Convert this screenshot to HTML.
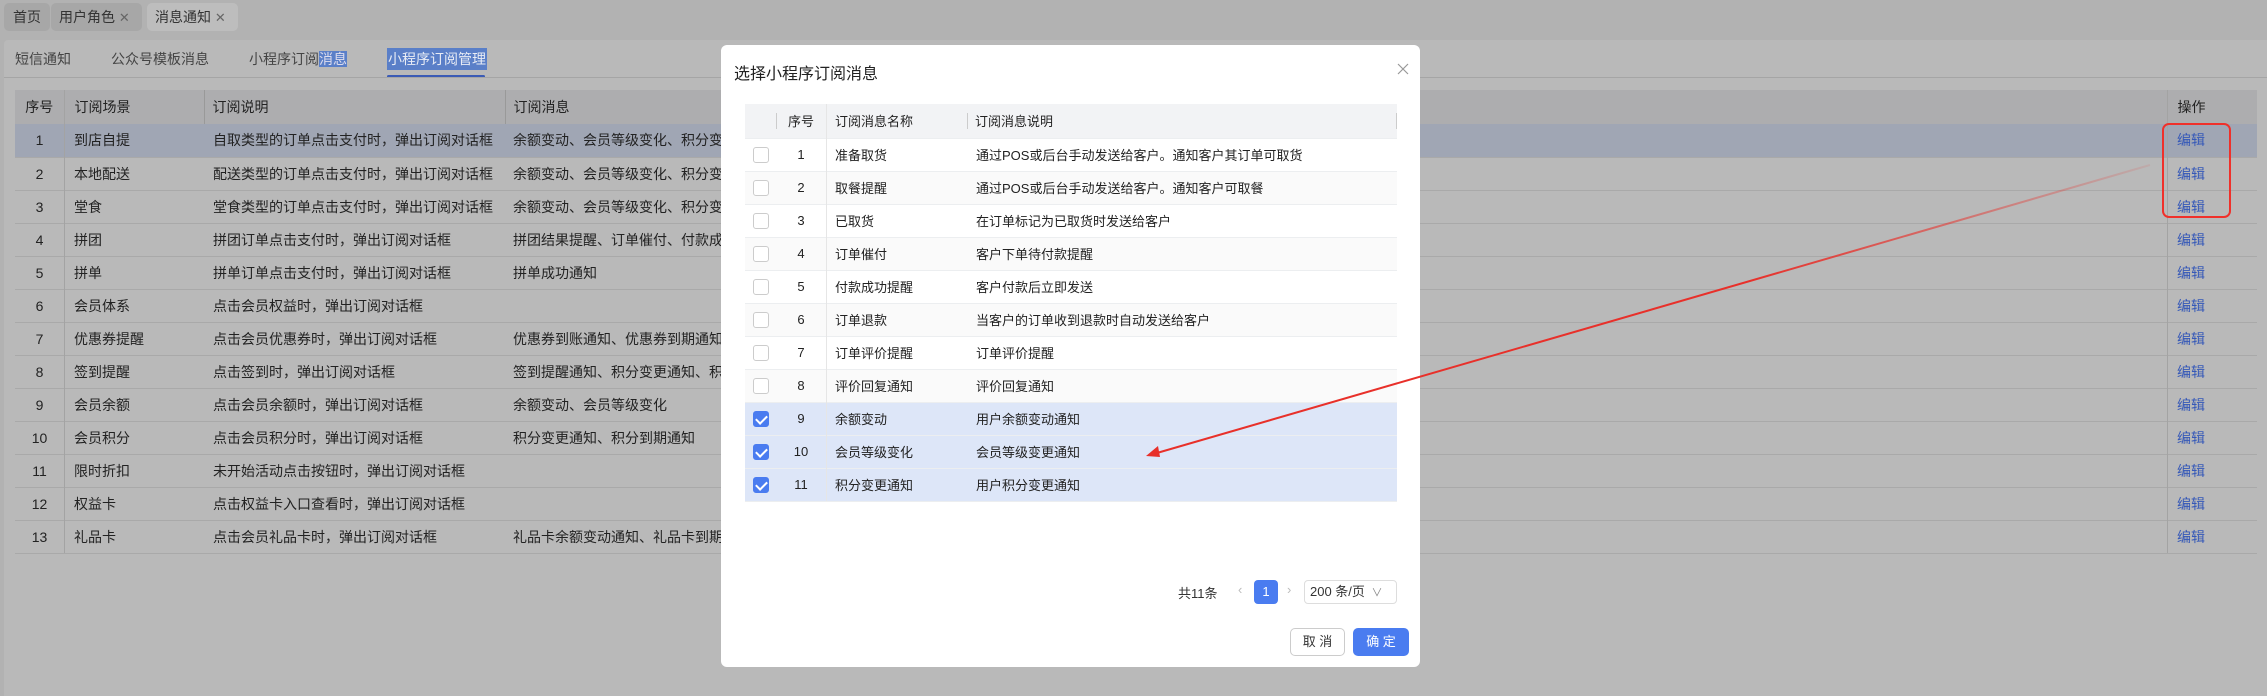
<!DOCTYPE html>
<html><head><meta charset="utf-8"><style>
*{margin:0;padding:0;box-sizing:border-box}
body{width:2267px;height:696px;overflow:hidden;background:#b2b2b2;font-family:"Liberation Sans","Noto Sans CJK SC",sans-serif;font-size:14px;color:#222;position:relative}
.a{position:absolute;white-space:nowrap}
.tab{position:absolute;top:3px;height:28px;background:#a7a7a7;border-radius:5px;line-height:28px;font-size:14px;color:#333;padding:0 8px}
.panel{position:absolute;left:4px;top:40px;width:2263px;height:656px;background:#b9b9b9;border-radius:4px 0 0 0}
table{border-collapse:collapse}
.mt{position:absolute;left:15px;top:90px;width:2242px}
.mt td{height:33px;border-bottom:1px solid #a9a9a9;font-size:14px;color:#222;white-space:nowrap;overflow:hidden}
.mt tr.h td{background:#adadaf;height:34px;border-bottom:none}
.mt tr.sel td{background:#a0a6b4}
.mt td.ed{color:#3558b8}
.modal{position:absolute;left:721px;top:45px;width:699px;height:622px;background:#fff;border-radius:6px}
.st td{height:33px;border-bottom:1px solid #eceef0;font-size:13px;color:#222;white-space:nowrap}
.st tr.h td{background:#f2f3f5;height:34px}
.st tr.alt td{background:#fafafa}
.st tr.ck td{background:#dde6f8}
.cb{display:inline-block;width:16px;height:16px;border:1px solid #ccc;border-radius:3px;background:#fff;vertical-align:middle;position:relative}
.cb.on{background:#4a7cf0;border-color:#4a7cf0}
.cb.on:after{content:"";position:absolute;left:4px;top:1px;width:5px;height:9px;border:solid #fff;border-width:0 2px 2px 0;transform:rotate(45deg)}
.sep{position:absolute;width:1px;height:16px;background:#ccc}
</style></head><body>
<div class="tab" style="left:4px;padding:0 9px">首页</div>
<div class="tab" style="left:51px;width:91px">用户角色 <span style="color:#666;font-size:13px">✕</span></div>
<div class="tab" style="left:147px;width:91px;background:#bdbdbd">消息通知 <span style="color:#666;font-size:13px">✕</span></div>
<div class="panel"></div>
<div class="a" style="left:15px;top:49px;font-size:14px;color:#444">短信通知</div>
<div class="a" style="left:111px;top:49px;font-size:14px;color:#444">公众号模板消息</div>
<div class="a" style="left:249px;top:49px;font-size:14px;color:#444">小程序订阅<span style="background:#5a7fc8;color:#dde">消息</span></div>
<div class="a" style="left:387px;top:48px;font-size:14px;color:#e8ecf5;background:#5a7fc8;padding:1px 1px">小程序订阅管理</div>
<div class="a" style="left:387px;top:75px;width:98px;height:3px;background:#3b5bb5;border-radius:2px"></div>
<div class="a" style="left:4px;top:77px;width:2263px;height:1px;background:#a5a5a5"></div>
<table class="mt">
<tr class="h"><td style="width:49px;text-align:center;border-right:1px solid #9c9c9c">序号</td><td style="width:140px;padding-left:10px">订阅场景</td><td style="width:301px;padding-left:8px;border-left:1px solid #999">订阅说明</td><td style="width:1662px;padding-left:8px;border-left:1px solid #999">订阅消息</td><td style="padding-left:10px;border-left:1px solid #999">操作</td></tr>
<tr class="sel"><td align="center">1</td><td style="padding-left:10px">到店自提</td><td style="padding-left:9px">自取类型的订单点击支付时，弹出订阅对话框</td><td style="padding-left:8px">余额变动、会员等级变化、积分变更通知</td><td style="padding-left:10px" class="ed">编辑</td></tr>
<tr><td align="center">2</td><td style="padding-left:10px">本地配送</td><td style="padding-left:9px">配送类型的订单点击支付时，弹出订阅对话框</td><td style="padding-left:8px">余额变动、会员等级变化、积分变更通知</td><td style="padding-left:10px" class="ed">编辑</td></tr>
<tr><td align="center">3</td><td style="padding-left:10px">堂食</td><td style="padding-left:9px">堂食类型的订单点击支付时，弹出订阅对话框</td><td style="padding-left:8px">余额变动、会员等级变化、积分变更通知</td><td style="padding-left:10px" class="ed">编辑</td></tr>
<tr><td align="center">4</td><td style="padding-left:10px">拼团</td><td style="padding-left:9px">拼团订单点击支付时，弹出订阅对话框</td><td style="padding-left:8px">拼团结果提醒、订单催付、付款成功提醒</td><td style="padding-left:10px" class="ed">编辑</td></tr>
<tr><td align="center">5</td><td style="padding-left:10px">拼单</td><td style="padding-left:9px">拼单订单点击支付时，弹出订阅对话框</td><td style="padding-left:8px">拼单成功通知</td><td style="padding-left:10px" class="ed">编辑</td></tr>
<tr><td align="center">6</td><td style="padding-left:10px">会员体系</td><td style="padding-left:9px">点击会员权益时，弹出订阅对话框</td><td></td><td style="padding-left:10px" class="ed">编辑</td></tr>
<tr><td align="center">7</td><td style="padding-left:10px">优惠券提醒</td><td style="padding-left:9px">点击会员优惠券时，弹出订阅对话框</td><td style="padding-left:8px">优惠券到账通知、优惠券到期通知</td><td style="padding-left:10px" class="ed">编辑</td></tr>
<tr><td align="center">8</td><td style="padding-left:10px">签到提醒</td><td style="padding-left:9px">点击签到时，弹出订阅对话框</td><td style="padding-left:8px">签到提醒通知、积分变更通知、积分到期通知</td><td style="padding-left:10px" class="ed">编辑</td></tr>
<tr><td align="center">9</td><td style="padding-left:10px">会员余额</td><td style="padding-left:9px">点击会员余额时，弹出订阅对话框</td><td style="padding-left:8px">余额变动、会员等级变化</td><td style="padding-left:10px" class="ed">编辑</td></tr>
<tr><td align="center">10</td><td style="padding-left:10px">会员积分</td><td style="padding-left:9px">点击会员积分时，弹出订阅对话框</td><td style="padding-left:8px">积分变更通知、积分到期通知</td><td style="padding-left:10px" class="ed">编辑</td></tr>
<tr><td align="center">11</td><td style="padding-left:10px">限时折扣</td><td style="padding-left:9px">未开始活动点击按钮时，弹出订阅对话框</td><td></td><td style="padding-left:10px" class="ed">编辑</td></tr>
<tr><td align="center">12</td><td style="padding-left:10px">权益卡</td><td style="padding-left:9px">点击权益卡入口查看时，弹出订阅对话框</td><td></td><td style="padding-left:10px" class="ed">编辑</td></tr>
<tr><td align="center">13</td><td style="padding-left:10px">礼品卡</td><td style="padding-left:9px">点击会员礼品卡时，弹出订阅对话框</td><td style="padding-left:8px">礼品卡余额变动通知、礼品卡到期通知</td><td style="padding-left:10px" class="ed">编辑</td></tr>
</table>
<div class="a" style="left:64px;top:90px;width:1px;height:463px;background:#a3a3a3"></div>
<div class="a" style="left:2167px;top:90px;width:1px;height:463px;background:#a3a3a3"></div>
<div class="a" style="left:2162px;top:123px;width:69px;height:95px;border:2.5px solid #f0302a;border-radius:7px"></div>

<div class="modal">
<div class="a" style="left:13px;top:15px;font-size:16px;color:#222">选择小程序订阅消息</div>
<svg class="a" style="left:676px;top:18px" width="12" height="12"><path d="M1 1L11 11M11 1L1 11" stroke="#999" stroke-width="1.2"/></svg>
<table class="st" style="position:absolute;left:24px;top:59px;width:652px">
<tr class="h"><td style="width:31px"></td><td style="width:50px;text-align:center">序号</td><td style="width:141px;padding-left:9px">订阅消息名称</td><td style="padding-left:8px">订阅消息说明</td></tr>
<tr><td align="center"><span class="cb"></span></td><td align="center">1</td><td style="padding-left:9px">准备取货</td><td style="padding-left:9px">通过POS或后台手动发送给客户。通知客户其订单可取货</td></tr>
<tr class="alt"><td align="center"><span class="cb"></span></td><td align="center">2</td><td style="padding-left:9px">取餐提醒</td><td style="padding-left:9px">通过POS或后台手动发送给客户。通知客户可取餐</td></tr>
<tr><td align="center"><span class="cb"></span></td><td align="center">3</td><td style="padding-left:9px">已取货</td><td style="padding-left:9px">在订单标记为已取货时发送给客户</td></tr>
<tr class="alt"><td align="center"><span class="cb"></span></td><td align="center">4</td><td style="padding-left:9px">订单催付</td><td style="padding-left:9px">客户下单待付款提醒</td></tr>
<tr><td align="center"><span class="cb"></span></td><td align="center">5</td><td style="padding-left:9px">付款成功提醒</td><td style="padding-left:9px">客户付款后立即发送</td></tr>
<tr class="alt"><td align="center"><span class="cb"></span></td><td align="center">6</td><td style="padding-left:9px">订单退款</td><td style="padding-left:9px">当客户的订单收到退款时自动发送给客户</td></tr>
<tr><td align="center"><span class="cb"></span></td><td align="center">7</td><td style="padding-left:9px">订单评价提醒</td><td style="padding-left:9px">订单评价提醒</td></tr>
<tr class="alt"><td align="center"><span class="cb"></span></td><td align="center">8</td><td style="padding-left:9px">评价回复通知</td><td style="padding-left:9px">评价回复通知</td></tr>
<tr class="ck"><td align="center"><span class="cb on"></span></td><td align="center">9</td><td style="padding-left:9px">余额变动</td><td style="padding-left:9px">用户余额变动通知</td></tr>
<tr class="ck"><td align="center"><span class="cb on"></span></td><td align="center">10</td><td style="padding-left:9px">会员等级变化</td><td style="padding-left:9px">会员等级变更通知</td></tr>
<tr class="ck"><td align="center"><span class="cb on"></span></td><td align="center">11</td><td style="padding-left:9px">积分变更通知</td><td style="padding-left:9px">用户积分变更通知</td></tr>
</table>
<div class="sep" style="left:55px;top:68px"></div>
<div class="sep" style="left:246px;top:68px"></div>
<div class="sep" style="left:675px;top:68px"></div>
<div class="a" style="left:105px;top:59px;width:1px;height:397px;background:#e6e6e6"></div>
<div class="a" style="left:457px;top:538px;font-size:13px;color:#333">共11条</div>
<div class="a" style="left:517px;top:537px;font-size:13px;color:#bbb">‹</div>
<div class="a" style="left:533px;top:535px;width:24px;height:24px;background:#4a7cf0;border-radius:4px;color:#fff;text-align:center;line-height:24px;font-size:13px">1</div>
<div class="a" style="left:566px;top:537px;font-size:13px;color:#bbb">›</div>
<div class="a" style="left:583px;top:535px;width:93px;height:24px;border:1px solid #ddd;border-radius:4px;font-size:13px;line-height:22px;padding-left:5px;color:#333">200 条/页 <span style="color:#888;font-size:11px;margin-left:3px">∨</span></div>
<div class="a" style="left:569px;top:583px;width:55px;height:28px;border:1px solid #ccc;border-radius:5px;text-align:center;line-height:26px;font-size:13px;color:#333">取 消</div>
<div class="a" style="left:632px;top:583px;width:56px;height:28px;background:#4a7cf0;border-radius:5px;text-align:center;line-height:28px;font-size:13px;color:#fff">确 定</div>
</div>

<svg class="a" style="left:0;top:0" width="2267" height="696">
<defs><linearGradient id="g" x1="1146" y1="456" x2="2150" y2="165" gradientUnits="userSpaceOnUse"><stop offset="0" stop-color="#e8302a"/><stop offset="0.6" stop-color="#e8302a"/><stop offset="1" stop-color="#e8302a" stop-opacity="0.1"/></linearGradient></defs>
<line x1="2150" y1="165" x2="1150" y2="455" stroke="url(#g)" stroke-width="2"/>
<path d="M1146 456 L1158 446 L1160 457 Z" fill="#e8302a"/>
</svg>
</body></html>
